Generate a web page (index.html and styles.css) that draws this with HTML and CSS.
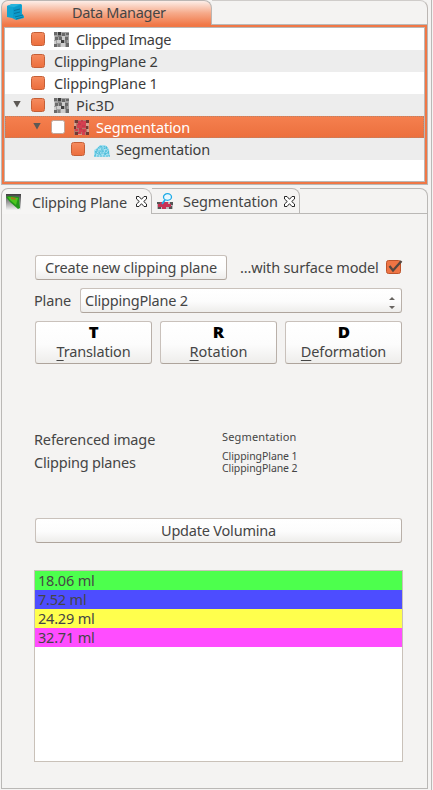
FILE: index.html
```html
<!DOCTYPE html>
<html lang="en">
<head>
<meta charset="utf-8">
<title>Data Manager</title>
<link rel="stylesheet" href="styles.css">
</head>
<body>
<svg class="defs" width="0" height="0">
  <defs>
    <symbol id="image" viewBox="0 0 15 15">
      <path fill="#a2a2a2" d="M0 0h15v15H0z"/>
      <path fill="#3e3e3e" d="M4 0h3v3H4zM7 8h3v3H7z"/>
      <path fill="#6a6a6a" d="M0 0h3v3H0zM8 1h3v3H8zM1 5h3v3H1zM5 5h3v3H5zM12 1h3v2h-3zM11 5h3v3h-3zM0 12h3v3H0zM12 11h3v4h-3z"/>
      <path fill="#838383" d="M11 8h2v3h-2zM4 12h2v3H4zM4 3h3v2H4z"/>
      <path fill="#cecece" d="M8 4h3v4H8zM3 8h4v3H3zM7 11h4v4H7zM0 4h1v4H0zM0 9h2v3H0z"/>
    </symbol>
    <symbol id="seg" viewBox="0 0 15 15">
      <path fill="#b5786a" d="M0 0h15v15H0z"/>
      <path fill="#713a34" d="M1 0h3v3H1zM12 0h3v3h-3zM0 6h2v3H0zM1 12h3v3H1zM12 12h3v3h-3zM12 6h2v3h-2z"/>
      <path fill="#d43f50" d="M4 1h8v3H4zM3 4h9v4H3zM5 9h7v3H5zM4 12h3v2H4zM8 12h3v3H8zM1 9h3v2H1z"/>
      <path fill="#c23c4b" d="M4 3h3v2H4zM8 5h3v2H8zM5 8h3v2H5zM9 10h2v2H9zM7 0h2v2H7z"/>
      <path fill="#d4a28e" d="M12 3h3v3h-3zM0 3h2v3H0zM13 9h2v3h-2zM4 14h4v1H4z"/>
    </symbol>
    <symbol id="close" viewBox="0 0 11 11">
      <path fill="#fff" stroke="#111" stroke-width=".9" d="M.5.5H3L5.500 3.300 8 .5h2.500V3L7.700 5.500l2.800 2.500v2.500H8L5.500 7.700 3 10.500H.5V8l2.800-2.500L.5 3z"/>
    </symbol>
  </defs>
</svg>
<div class="app">
  <section class="manager">
    <header class="manager-head">
      <div class="manager-tab">
        <svg class="drawers" width="17" height="17" viewBox="0 0 17 17"><path fill="#12a4d0" d="M0 2 5 0h9l1 1v9l2 2v2l-8 2-4-2-5-1z"/><path fill="#2cb4dc" d="m0 2 5-2h9l-7 3z"/><path fill="#0d9aca" d="m6 4 8-3v10l-8 3z"/><path fill="none" stroke="#0a6f96" stroke-width=".9" d="M7 6.500 13 5M7 9.500 13 8M8 13l8-2M9 15l7-2"/></svg>
        <span class="t t-manager">Data Manager</span>
      </div>
      <div class="manager-rest"></div>
    </header>
    <div class="tree">
      <div class="row lvl1"><i class="box"></i><svg class="ico"><use href="#image"/></svg><span class="t t-clipped">Clipped Image</span></div>
      <div class="row lvl1"><i class="box"></i><span class="t t-plane">ClippingPlane 2</span></div>
      <div class="row lvl1"><i class="box"></i><span class="t t-plane">ClippingPlane 1</span></div>
      <div class="row open1"><i class="arrow"></i><i class="box"></i><svg class="ico"><use href="#image"/></svg><span class="t t-pic">Pic3D</span></div>
      <div class="row open2 selected"><i class="arrow"></i><i class="box off"></i><svg class="ico"><use href="#seg"/></svg><span class="t t-seg">Segmentation</span></div>
      <div class="row lvl3"><i class="box"></i><svg class="surf" width="17" height="14" viewBox="0 0 17 14"><path fill="#a6e0f0" d="M0 14V7l3-2 3-3h5l4 4 1 8H0z"/><path fill="none" stroke="#3fb7d6" stroke-width=".8" stroke-dasharray="2 1" d="M1 13 3 6l3-3 3 1 3-1 2 4 1 6M1 8l4 4 3-5 3 5 4-4M3 6l4 6M6 3l2 4 5-3M11 12l2-8M0 13h16M1 10h14M2 8h12M4 5h9"/></svg><span class="t t-seg">Segmentation</span></div>
    </div>
  </section>
  <section class="clip">
    <nav class="tabs">
      <div class="tab active">
        <svg width="16" height="16" viewBox="0 0 16 16"><defs><linearGradient id="g" x2="0" y2="1"><stop stop-color="#3e3e3e"/><stop offset="1" stop-color="#f2f2f2"/></linearGradient></defs><path fill="url(#g)" d="M0 0h15v16H0z"/><path fill="#23961c" d="m0 3 3-1 10 1 1 11-2 1-8-7z"/><path fill="#4cc51e" d="m2 3 10 1-2 7-6-5z"/><path fill="#a5771b" d="m5 3 5 1-1 2-4-1z"/></svg>
        <span class="t t-tab1">Clipping Plane</span>
        <svg class="x"><use href="#close"/></svg>
      </div>
      <div class="tab second">
        <svg width="16" height="17" viewBox="0 0 16 17"><path fill="#bbb" d="M0 9h16v7H0z"/><path fill="#555" d="M0 9h3v2H0zM13 9h3v3h-3zM1 14h3v2H1zM12 13h3v3h-3z"/><path fill="#c73254" d="M3 9h8v2h3v3H9v2H5v-2H1v-3h2z"/><ellipse cx="10.500" cy="4" rx="4" ry="3.300" fill="#e7f8ff" stroke="#1eaae6" stroke-width="1.300"/><path stroke="#1eaae6" stroke-width="1.800" d="m8 7-3 4"/></svg>
        <span class="t t-tab2">Segmentation</span>
        <svg class="x"><use href="#close"/></svg>
      </div>
      <div class="tabs-rest"></div>
    </nav>
    <div class="form">
      <div class="create-line">
        <button class="btn create"><span class="t t-create">Create new clipping plane</span></button>
        <span class="t t-with">...with surface model</span>
        <svg class="check" width="17" height="16" viewBox="0 0 17 16"><rect x=".5" y="1.500" width="14" height="13" rx="2" fill="#ee7444" stroke="#bd542c"/><path fill="none" stroke="#54463f" stroke-width="2.300" d="m3.500 7 3.500 4.500L15.500 2"/></svg>
      </div>
      <div class="plane-line">
        <span class="t t-label">Plane</span>
        <div class="btn combo"><span class="t t-combo">ClippingPlane 2</span><svg width="6" height="13" viewBox="0 0 6 13"><path fill="#686460" d="m0 4 3-3 3 3zM0 10l3 3 3-3z"/></svg></div>
      </div>
      <div class="modes">
        <button class="btn mode"><b>T</b><span class="t t-trans"><u>T</u>ranslation</span></button>
        <button class="btn mode"><b>R</b><span class="t t-rot"><u>R</u>otation</span></button>
        <button class="btn mode"><b>D</b><span class="t t-def"><u>D</u>eformation</span></button>
      </div>
      <div class="info">
        <span class="t t-ref">Referenced image</span><span class="small s-seg">Segmentation</span>
        <span class="t t-planes">Clipping planes</span><span class="small s-planes"><span>ClippingPlane 1</span><span>ClippingPlane 2</span></span>
      </div>
      <button class="btn update"><span class="t t-update">Update Volumina</span></button>
      <div class="volumes">
        <div class="vol green"><span class="t t-vol">18.06 ml</span></div>
        <div class="vol blue"><span class="t t-vol">7.52 ml</span></div>
        <div class="vol yellow"><span class="t t-vol">24.29 ml</span></div>
        <div class="vol pink"><span class="t t-vol">32.71 ml</span></div>
      </div>
    </div>
  </section>
</div>
</body>
</html>
```
FILE: styles.css
```css
* { box-sizing: border-box; }
body { margin: 0; background: #f4f3f2; font: 14.5px/20px "Noto Sans", sans-serif; color: #454545; }
.defs { display: block; height: 0; }
svg { display: block; flex: none; }
.app { width: 432px; height: 790px; padding-left: 1px; border-right: 1px solid #bab8b6; overflow: hidden; }
.t { white-space: nowrap; letter-spacing: -.15px; }

.manager { width: 427px; height: 185px; margin-bottom: 3px; display: flex; flex-direction: column; }
.manager-head { display: flex; height: 25px; }
.manager-tab { width: 211px; height: 25px; border: 1px solid #bbb6b3; border-bottom: 0; border-radius: 7px 8px 0 0; background: linear-gradient(#fdeee8, #f6aa8a 50%, #f07746); display: flex; align-items: center; padding: 0 0 2px 5px; }
.drawers { margin-right: 48px; }
.manager-rest { flex: 1; border-top: 1px solid #cfccca; border-right: 1px solid #bbb6b3; border-bottom: 1px solid #bab8b6; border-radius: 0 8px 0 0; }
.tree { flex: 1; background: #fff; border: 1px solid #bab8b6; border-top: 0; box-shadow: inset 0 0 0 2px #f07746, inset 0 0 0 3px #bab8b6; padding: 3px; }
.row { height: 22px; display: flex; align-items: center; color: #3c3c3c; }
.row:nth-child(even) { background: #ededed; }
.lvl1 { padding-left: 26px; }
.open1 { padding-left: 8px; }
.open2 { padding-left: 28px; }
.lvl3 { padding-left: 66px; }
.box { flex: none; width: 14px; height: 14px; margin-right: 9px; border: 1px solid #c55f36; border-radius: 2.500px; background: linear-gradient(#f58a5d, #ec6f3e); }
.box.off { background: #fff; border-color: #c0a598; }
.arrow { flex: none; width: 8px; height: 7px; margin: 0 10px 2px 0; background: #5d5955; clip-path: polygon(0 0, 100% 0, 50% 100%); }
.ico { width: 15px; height: 15px; margin-right: 7px; shape-rendering: crispEdges; }
.surf { margin: 2px 5px 0 0; }
.row.selected { background: linear-gradient(#f5804f, #ec6f3d); outline: 1px dotted #b98268; outline-offset: -1px; color: #fff; }

.t-manager, .t-clipped { letter-spacing: -.3px; }
.t-pic, .t-rot { letter-spacing: 0; }
.t-tab1, .t-combo, .t-update, .t-vol { letter-spacing: -.2px; }
.t-tab2 { letter-spacing: -.08px; }
.t-planes { letter-spacing: -.2px; }

.clip { width: 427px; height: 601px; display: flex; flex-direction: column; }
.tabs { display: flex; height: 26px; }
.tab { display: flex; align-items: center; border-top: 1px solid #bab8b6; border-right: 1px solid #bab8b6; border-radius: 0 8px 0 0; }
.tab.active { width: 151px; border-left: 1px solid #bab8b6; border-radius: 7px 9px 0 0; padding-left: 4px; background: #f6f5f4; }
.tab.second { width: 148px; padding-left: 5px; border-bottom: 1px solid #bab8b6; }
.tab .t { margin-left: 10px; }
.x { width: 11px; height: 11px; margin: 0 4px 0 auto; }
.tabs-rest { flex: 1; border: 1px solid #bab8b6; border-left: 0; border-radius: 0 8px 0 0; }
.form { flex: 1; border: 1px solid #bab8b6; border-top: 0; padding: 41px 24px 0 32px; display: flex; flex-direction: column; }
.btn { display: flex; align-items: center; justify-content: center; height: 25px; padding: 0 0 2px; font: inherit; color: inherit; border: 1px solid #c9c1bb; border-bottom-color: #aea49c; border-right-color: #b9b0a9; border-radius: 3px; background: linear-gradient(#fff, #fcfcfc 55%, #eeedeb); }
.create-line { display: flex; align-items: center; margin-left: 1px; height: 25px; }
.create { width: 192px; margin-right: 13px; }
.t-with, .t-label { padding-bottom: 2px; }
.check { margin: 0 0 2px auto; }
.plane-line { display: flex; align-items: center; justify-content: space-between; margin: 8px 1px 8px 0; height: 25px; }
.combo { width: 322px; justify-content: space-between; padding: 0 6px 2px 4px; }
.combo svg { margin-top: 5px; }
.modes { display: grid; grid-template-columns: repeat(3, 117px); gap: 8px; margin-left: 1px; }
.mode { flex-direction: column; height: 43px; padding-bottom: 2px; }
.mode b { font: 800 16px/20px "Open Sans", sans-serif; color: #000; transform: scaleX(1.05); }
.mode .t { margin-top: -1px; }
.mode u { text-decoration-thickness: 1px; text-underline-offset: 3px; text-decoration-skip-ink: none; }
.info { display: grid; grid-template-columns: 188px auto; grid-template-rows: 23px 24px; margin-top: 63px; align-items: center; height: 47px; }
.small { font-size: 11px; line-height: 12px; white-space: nowrap; }
.s-seg { margin-top: -3px; letter-spacing: .15px; }
.s-planes { display: grid; font-size: 10.500px; letter-spacing: -.08px; }
.update { width: 367px; margin: 44px 0 27px 1px; }
.volumes { width: 369px; height: 192px; border: 1px solid #c9c1b9; background: #fff; }
.vol { height: 19px; line-height: 19px; padding-left: 3px; }
.green { background: #4dff4d; }
.blue { background: #4d4dff; }
.yellow { background: #ffff4d; }
.pink { background: #ff4dff; }
```
